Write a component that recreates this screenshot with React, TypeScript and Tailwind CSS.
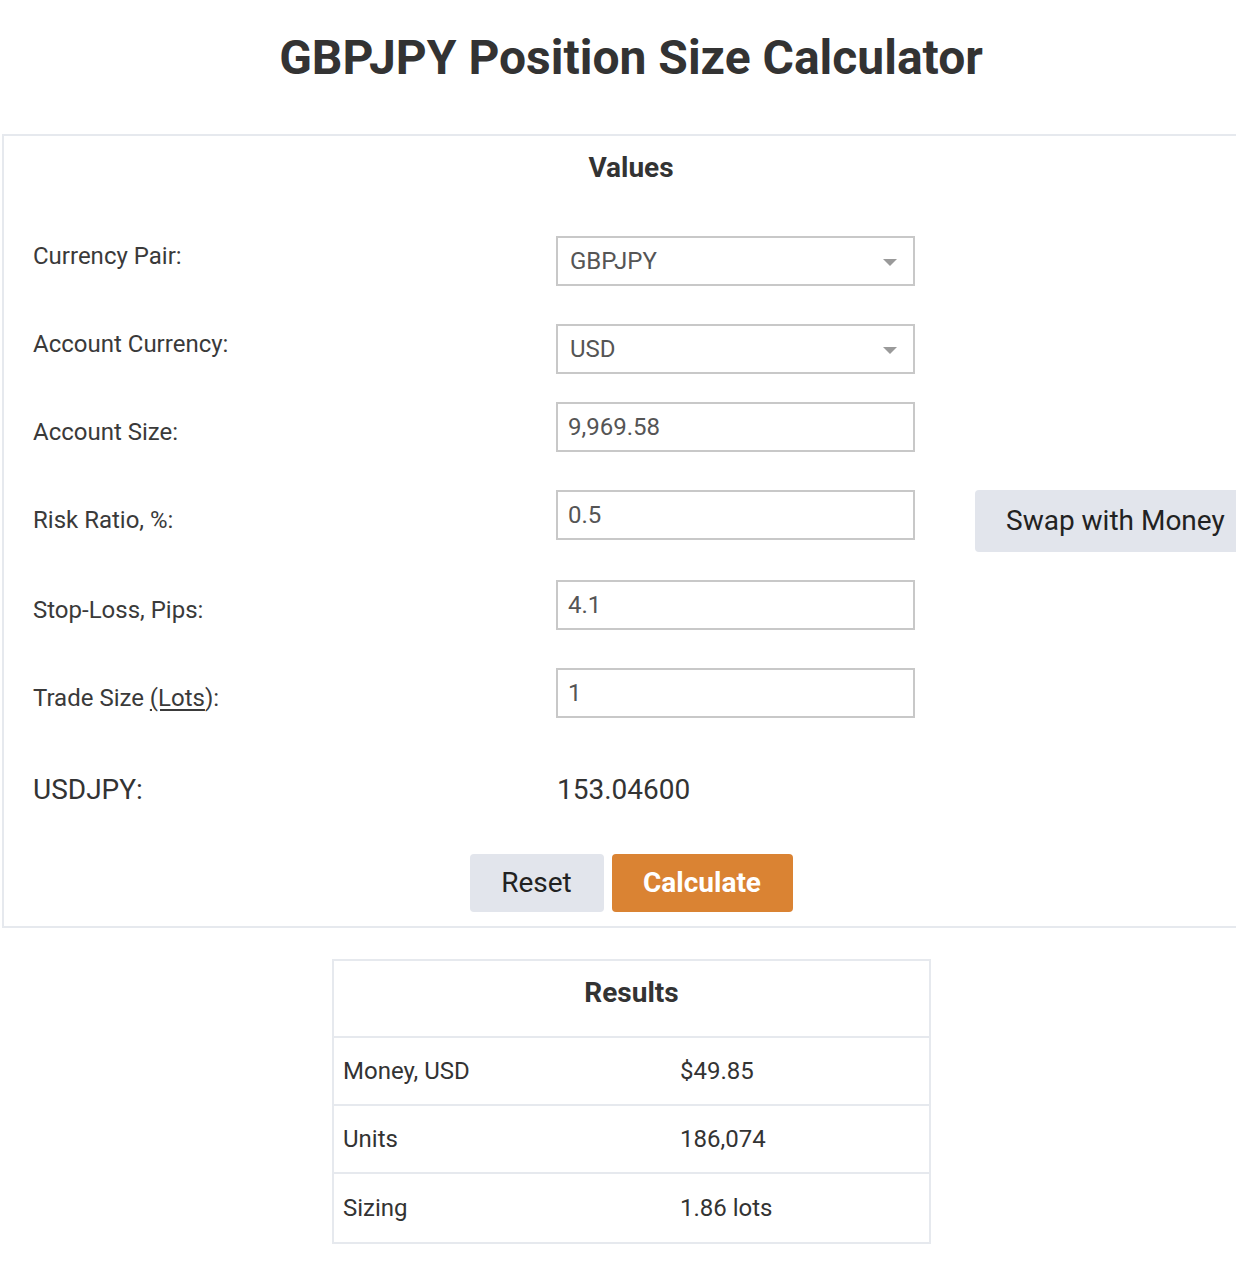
import React from "react";

const F = { fontFamily: "Roboto, 'Liberation Sans', sans-serif" };

function Arrow() {
  return (
    <svg width="14" height="8" viewBox="0 0 14 8" className="absolute right-[16px] top-[21px]">
      <polygon points="0,0 14,0 7,7" fill="#9a9a9a" />
    </svg>
  );
}

function Field({ value, select, cls }: { value: string; select?: boolean; cls: string }) {
  return (
    <div className={`relative w-[359px] h-[50px] border-2 border-[#c8c8c8] bg-white flex items-center ${select ? "pl-[12px]" : "pl-[10px]"} text-[24px] text-[#555] ${cls}`}>
      {value}
      {select && <Arrow />}
    </div>
  );
}

function Row({ label, value, select, inputCls, extra, h = "h-[88px]" }: { label: React.ReactNode; value: string; select?: boolean; inputCls: string; extra?: React.ReactNode; h?: string }) {
  return (
    <div className={`flex items-start ${h}`}>
      <div className="w-[523px] mt-[10px] text-[24px] leading-[28px] text-[#3a3a3a]">{label}</div>
      <Field value={value} select={select} cls={inputCls} />
      {extra}
    </div>
  );
}

export default function App() {
  return (
    <div className="w-[1236px] h-[1274px] overflow-hidden bg-white" style={F}>
      <div className="w-[1258px] ml-[2px]">
        <h1 className="pt-[30px] h-[132px] text-center text-[48px] leading-[56px] font-bold text-[#333]">
          GBPJPY Position Size Calculator
        </h1>
        <div className="mt-[2px] border-2 border-[#e6e9ee] pl-[29px] pt-[16px] pb-[14px]">
          <div className="text-center text-[28px] leading-[32px] font-bold text-[#333] pr-[29px]">Values</div>
          <div className="mt-[48px]">
            <Row label="Currency Pair:" value="GBPJPY" select inputCls="mt-[4px]" />
            <Row label="Account Currency:" value="USD" select inputCls="mt-[4px]" />
            <Row label="Account Size:" value="9,969.58" inputCls="mt-[-6px]" />
            <Row
              label="Risk Ratio, %:"
              value="0.5"
              inputCls="mt-[-6px]"
              h="h-[90px]"
              extra={
                <button className="ml-[60px] mt-[-6px] h-[62px] px-[31px] rounded-[4px] bg-[#e2e5ec] text-[28px] text-[#222] whitespace-nowrap">
                  Swap with Money
                </button>
              }
            />
            <Row label="Stop-Loss, Pips:" value="4.1" inputCls="mt-[-6px]" />
            <Row
              label={
                <span>
                  Trade Size <span className="underline underline-offset-[3px]">(Lots</span>):
                </span>
              }
              value="1"
              inputCls="mt-[-6px]"
            />
          </div>
          <div className="flex mt-[12px] text-[28px] leading-[32px] text-[#333]">
            <div className="w-[524px]">USDJPY:</div>
            <div>153.04600</div>
          </div>
          <div className="flex justify-center gap-[8px] mt-[48px] pr-[29px]">
            <button className="w-[134px] h-[58px] rounded-[4px] bg-[#e2e5ec] text-[28px] text-[#222]">Reset</button>
            <button className="w-[181px] h-[58px] rounded-[4px] bg-[#da8333] text-[28px] font-bold text-white">Calculate</button>
          </div>
        </div>
        <div className="mt-[31px] ml-[330px] w-[599px] border-2 border-[#e6e9ee]">
          <div className="h-[77px] flex items-center justify-center text-[28px] font-bold text-[#333] border-b-2 border-[#e6e9ee] pb-[12px]">
            Results
          </div>
          {[
            ["Money, USD", "$49.85"],
            ["Units", "186,074"],
            ["Sizing", "1.86 lots"],
          ].map(([a, b], i) => (
            <div key={a} className={`h-[68px] flex items-center text-[24px] text-[#333] ${i < 2 ? "border-b-2 border-[#e6e9ee]" : ""}`}>
              <div className="w-[346px] pl-[9px]">{a}</div>
              <div>{b}</div>
            </div>
          ))}
        </div>
      </div>
    </div>
  );
}
